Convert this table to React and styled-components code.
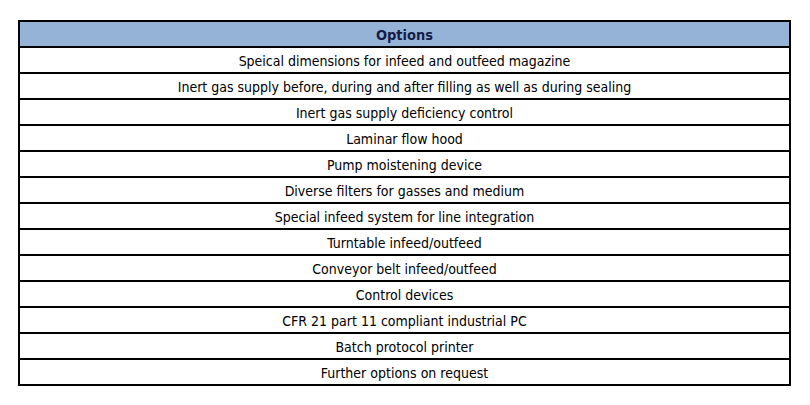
import React from 'react';
import styled, { createGlobalStyle } from 'styled-components';

const GlobalStyle = createGlobalStyle`
  html, body {
    margin: 0;
    padding: 0;
    background: #ffffff;
  }
  body {
    font-family: "DejaVu Sans Condensed", "DejaVu Sans", Tahoma, sans-serif;
  }
`;

const options = [
  'Speical dimensions for infeed and outfeed magazine',
  'Inert gas supply before, during and after filling as well as during sealing',
  'Inert gas supply deficiency control',
  'Laminar flow hood',
  'Pump moistening device',
  'Diverse filters for gasses and medium',
  'Special infeed system for line integration',
  'Turntable infeed/outfeed',
  'Conveyor belt infeed/outfeed',
  'Control devices',
  'CFR 21 part 11 compliant industrial PC',
  'Batch protocol printer',
  'Further options on request',
];

const Page = styled.div`
  width: 810px;
  height: 405px;
  padding: 20px 0 0 18px;
  box-sizing: border-box;
`;

const Table = styled.table`
  width: 773px;
  border-collapse: collapse;
  border: 2px solid #000;
`;

const HeadCell = styled.th`
  height: 23px;
  padding: 1px 0 0;
  background: #95b3d7;
  color: #161c48;
  font-size: 14.5px;
  font-weight: bold;
  text-align: center;
  border-bottom: 2px solid #000;
`;

const Cell = styled.td`
  height: 23px;
  padding: 1px 0 0;
  color: #000;
  font-size: 14px;
  text-align: center;
  border-bottom: 2px solid #000;
`;

export default function App() {
  return (
    <>
      <GlobalStyle />
      <Page>
        <Table>
          <thead>
            <tr>
              <HeadCell>Options</HeadCell>
            </tr>
          </thead>
          <tbody>
            {options.map((item) => (
              <tr key={item}>
                <Cell>{item}</Cell>
              </tr>
            ))}
          </tbody>
        </Table>
      </Page>
    </>
  );
}
